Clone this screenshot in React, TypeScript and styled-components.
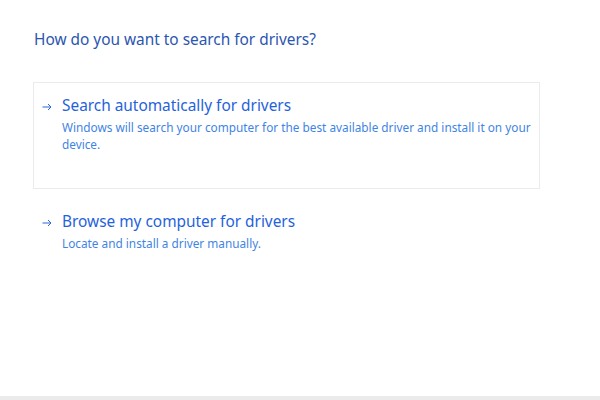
import React from "react";
import styled, { createGlobalStyle } from "styled-components";

const GlobalStyle = createGlobalStyle`
    html, body {
        margin: 0;
        padding: 0;
        background: #ffffff;
    }
    body {
        font-family: "Noto Sans", "Open Sans", sans-serif;
    }
`;

const Page = styled.div`
    width: 600px;
    height: 400px;
    display: flex;
    flex-direction: column;
    background: #ffffff;
    overflow: hidden;
`;

const Content = styled.div`
    flex: 1;
    padding: 29px 60px 0 33px;
`;

const Heading = styled.div`
    font-size: 15.4px;
    color: #2b55b0;
    padding-left: 1px;
    margin-bottom: 32px;
`;

const Option = styled.div<{ $outlined?: boolean }>`
    display: flex;
    align-items: flex-start;
    width: 507px;
    height: ${(p) => (p.$outlined ? "107px" : "auto")};
    box-sizing: border-box;
    padding: 11px 8px 0 8px;
    border: 1px solid ${(p) => (p.$outlined ? "#ebebeb" : "transparent")};
    margin-bottom: 9px;
`;

const ArrowBox = styled.span`
    flex: 0 0 20px;
    height: 24px;
    display: flex;
    align-items: center;
    padding-top: 1px;
    box-sizing: border-box;
`;

const Texts = styled.div`
    display: flex;
    flex-direction: column;
`;

const Title = styled.div`
    font-size: 15.4px;
    line-height: 24px;
    color: #1f62dc;
`;

const Description = styled.div`
    font-size: 11.8px;
    line-height: 17px;
    margin-top: 1px;
    color: #3f84e4;
`;

const Footer = styled.div`
    height: 4px;
    background: #ebebeb;
`;

const Arrow = () => (
    <svg width="10" height="8" viewBox="0 0 10 8" fill="none">
        <path d="M0.5 4H9M6 1l3 3-3 3" stroke="#2a66d8" strokeWidth="1" />
    </svg>
);

const options = [
    {
        title: "Search automatically for drivers",
        description:
            "Windows will search your computer for the best available driver and install it on your device.",
        outlined: true,
    },
    {
        title: "Browse my computer for drivers",
        description: "Locate and install a driver manually.",
        outlined: false,
    },
];

const App = () => {
    return (
        <Page>
            <GlobalStyle />
            <Content>
                <Heading>How do you want to search for drivers?</Heading>
                {options.map((o) => (
                    <Option key={o.title} $outlined={o.outlined}>
                        <ArrowBox>
                            <Arrow />
                        </ArrowBox>
                        <Texts>
                            <Title>{o.title}</Title>
                            <Description>{o.description}</Description>
                        </Texts>
                    </Option>
                ))}
            </Content>
            <Footer />
        </Page>
    );
};

export default App;
